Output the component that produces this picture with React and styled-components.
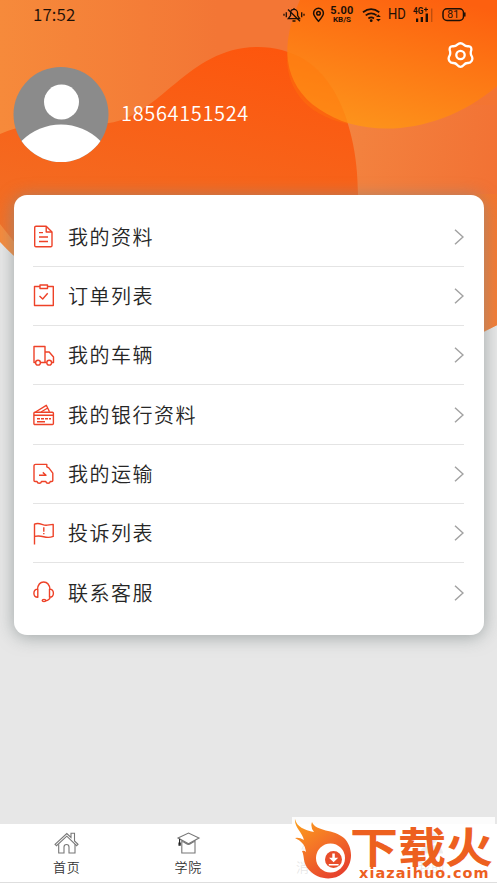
import React from 'react';
import styled, { createGlobalStyle } from 'styled-components';

const Global = createGlobalStyle`
  * { box-sizing: border-box; }
  body { margin: 0; background: #e7e7e7; overflow: hidden; }
`;

const Screen = styled.div`
  position: relative;
  display: flex;
  flex-direction: column;
  width: 497px;
  height: 883px;
  overflow: hidden;
  background: #e7e7e7;
  font-family: 'Noto Sans CJK SC', sans-serif;
  color: #262626;
`;

const Backdrop = styled.svg`
  position: absolute;
  inset: 0 auto auto 0;
`;

const StatusBar = styled.header`
  position: relative;
  display: flex;
  align-items: center;
  justify-content: space-between;
  height: 29px;
  padding: 0 31px 0 33px;
  color: #1d1007;
`;

const Clock = styled.span`
  font-size: 17px;
  font-weight: 350;
  line-height: 27px;
  margin-top: -3px;
  letter-spacing: 0.1px;
`;

const StatusIcons = styled.div`
  display: flex;
  align-items: center;
  height: 29px;
`;

const Glyph = styled.svg`
  display: block;
  flex: none;
  margin-left: ${(p) => p.$gap || 0}px;
`;

const Speed = styled.div`
  display: flex;
  flex-direction: column;
  align-items: center;
  width: 24px;
  margin-left: 5px;
  font-family: Roboto, sans-serif;
  font-weight: 700;
  font-size: 11px;
  line-height: 9px;
  letter-spacing: 0.3px;
  white-space: nowrap;
  small { font-size: 8px; line-height: 9px; letter-spacing: 0; }
`;

const Hd = styled.span`
  width: 18px;
  margin-left: 6px;
  font: 400 15.5px/29px Roboto, sans-serif;
  transform: scaleX(0.84);
  transform-origin: left;
`;

const Profile = styled.section`
  position: relative;
  display: flex;
  align-items: flex-start;
  height: 166px;
  padding: 38px 23px 0 13px;
`;

const Phone = styled.span`
  flex: 1;
  margin: 32px 0 0 12px;
  font-size: 20px;
  font-weight: 350;
  line-height: 28px;
  letter-spacing: 0.65px;
  color: #fff;
`;

const SettingsButton = styled.button`
  display: flex;
  margin-top: -26px;
  padding: 0;
  border: 0;
  background: none;
`;

const Card = styled.main`
  position: relative;
  display: flex;
  flex-direction: column;
  height: 440px;
  margin: 0 13.5px;
  padding: 12.5px 19.5px 0;
  border-radius: 13px;
  background: #fff;
  box-shadow: 0 2px 17px rgba(130, 140, 140, 0.72);
`;

const Row = styled.div`
  display: flex;
  align-items: center;
  height: 59.3px;
  border-bottom: 1px solid #e4e4e4;
  &:last-child { border-bottom: 0; }
`;

const RowLabel = styled.span`
  flex: 1;
  margin-left: 13px;
  font-size: 20px;
  font-weight: 350;
  line-height: 30px;
  letter-spacing: 1.5px;
`;

const TabBar = styled.nav`
  position: relative;
  display: grid;
  grid-template-columns: repeat(4, 1fr);
  height: 59px;
  margin-top: auto;
  padding: 0 5px 0 6px;
  background: #fff;
  border-bottom: 1px solid #dedede;
`;

const Tab = styled.div`
  display: flex;
  flex-direction: column;
  align-items: center;
  padding-top: 7px;
`;

const TabLabel = styled.span`
  margin-top: 3px;
  font-size: 13px;
  font-weight: 350;
  line-height: 18px;
  letter-spacing: 0.8px;
  color: #333;
`;

const Watermark = styled.aside`
  position: absolute;
  right: 2px;
  bottom: 2px;
  display: flex;
  width: 203px;
  height: 64px;
  background: rgba(255, 255, 255, 0.88);
  color: #ed601f;
`;

const Brand = styled.div`
  display: flex;
  flex-direction: column;
  margin-left: -3px;
`;

const BrandName = styled.svg`
  display: block;
  width: 143px;
  height: 50px;
  fill: currentColor;
  overflow: visible;
`;

const BrandUrl = styled.span`
  margin-left: 8px;
  font: 700 14.5px/12px 'DejaVu Sans', sans-serif;
  letter-spacing: 1.1px;
  transform: scaleX(0.995);
  transform-origin: left;
`;

const rowIcons = {
  profile: <><path d="M3 1.2h10.2L19 7v13.5a1.3 1.3 0 0 1-1.3 1.3H3a1.3 1.3 0 0 1-1.3-1.3v-18A1.3 1.3 0 0 1 3 1.2Z" /><path d="M13.2 1.2V7H19M6 7.6h4M6 12h9M6 16.5h9" /></>,
  order: <><path d="M7 2.5H1.5v19h18.8v-19H14M7 1h7.5v3.5H7ZM6.5 12l3.2 3 5-5.8" /></>,
  truck: <><path d="M2.5 18.5H1v-16h11v16H7.5M12 8h4.2l4.3 5v5.5h-1.8M13.5 18.5H12" /><circle cx="5" cy="18.7" r="2.4" /><circle cx="16.2" cy="18.7" r="2.4" /></>,
  bank: <><rect x="0.9" y="9.3" width="19.5" height="12.2" rx="1" /><path d="M1 12.3h19.4M2.5 9 13.3 2.3 16.5 8.8M8 9l6.7-4M4 15.8h3m1 0h3m1 0h3m1 0h2M4 18.8h8" /></>,
  transport: <><path d="M4 19.5H2a1 1 0 0 1-1-1V4a1.6 1.6 0 0 1 1.6-1.6h11.2v2.4l2 1.1 4 5.3v7.3a1 1 0 0 1-1 1h-1.5a2.3 2.3 0 0 1-4.5 0H8.5a2.3 2.3 0 0 1-4.5 0Z" /><path d="M6 13.2h7l-3.2-2.8" /></>,
  complaint: <><path d="M1.5 22.5V2.2c5-2.7 8.3 1.8 12.7.9l6-.7v12c-8.2 3.3-10-2.2-18.7 0" /><path d="M10.8 5.2v4.6M10.8 11v1.2" /></>,
  service: <><path d="M4.5 8.3C5 3.4 7.3 1 10.7 1S16.4 3.4 17 8.3M4.8 8.1C2.3 8.1.9 10 .9 12.3s1.4 4 3.9 4ZM16.5 8.1c2.5 0 3.9 1.9 3.9 4.2s-1.4 4-3.9 4ZM17.2 16.2c-.5 2.3-1.9 3.3-4.5 3.5" /><ellipse cx="11" cy="19.5" rx="1.8" ry="1.1" /></>,
};

const items = [
  ['profile', '我的资料'], ['order', '订单列表'], ['truck', '我的车辆'],
  ['bank', '我的银行资料'], ['transport', '我的运输'],
  ['complaint', '投诉列表'], ['service', '联系客服'],
];

const tabs = [
  ['首页', <><path d="M1 13.3 12.8 2.5l4.2 4V2.3h3.5V10l3.5 3.3-1.4 1.4L12.8 5.2 2.5 14.7Z" /><path d="M4.7 13.3V22H10v-6a2.5 2.5 0 0 1 5 0v6h6v-8.7" /></>],
  ['学院', <><path d="M2 7 12.5 2 23 7 12.5 12.8Z" /><path d="M5.8 9.3V22h13.2V9.3M5.8 10.5c3 .3 4.7 3 6.7 3S16 10.8 19 10.5" /><path d="M3.6 7.7v5.5" stroke="#222" /><path d="M3 12h1.2v2.2H3Z" stroke="#222" /></>],
  ['消息', <><path d="M5 18h15l-2-4V8a5.5 5.5 0 0 0-11 0v6ZM10 21h5" /></>],
  ['我的', <g fill="#555"><circle cx="12.5" cy="7" r="5.5" /><path d="M1.5 22c1-10 21-10 22 0Z" /></g>],
];

function Background() {
  return (
    <Backdrop width="497" height="360" viewBox="0 0 497 360">
      <defs>
        <linearGradient id="base" x1="0" y1=".3" x2="1" y2=".3">
          <stop stopColor="#f68a3b" /><stop offset="1" stopColor="#f37432" />
        </linearGradient>
        <linearGradient id="top" x1="0" y1="0" x2="1" y2="0">
          <stop stopColor="#f68a3b" /><stop offset=".62" stopColor="#f37635" />
        </linearGradient>
        <linearGradient id="right" x1="0" x2="1" y2=".25">
          <stop stopColor="#f38440" /><stop offset="1" stopColor="#f27234" />
        </linearGradient>
        <linearGradient id="hill" x1=".75" y1="0" x2=".4" y2="1">
          <stop stopColor="#fd560d" /><stop offset="1" stopColor="#f07329" />
        </linearGradient>
        <linearGradient id="sun" x1=".8" y1="0" x2=".35" y2="1">
          <stop stopColor="#fd600f" /><stop offset="1" stopColor="#fd931b" />
        </linearGradient>
        <linearGradient id="lowEdge" x1="0" x2="0" y2="1">
          <stop stopColor="#f57928" /><stop offset="1" stopColor="#f58636" />
        </linearGradient>
      </defs>
      <path d="M0 0H497V325Q440 356 300 352Q90 340 0 242Z" fill="url(#base)" />
      <path d="M0 0H350V125H0Z" fill="url(#top)" />
      <path d="M340 105H497V325Q440 356 340 354Z" fill="url(#right)" />
      <path d="M0 134C38 117 72 124 109 123C161 116 188 47 258 47C326 47 358 116 358 194V300H60L0 224Z" fill="url(#hill)" />
      <path d="M300 0C280 43 282 84 319 109C365 141 441 134 497 86V0Z" fill="url(#sun)" />
      <path d="M287 52C319 61 338 91 348 124C303 115 285 85 287 52Z" fill="#ff770b" opacity=".38" />
      <path d="M475 194H497V325L475 337Z" fill="url(#lowEdge)" opacity=".55" />
    </Backdrop>
  );
}

function Status() {
  return (
    <StatusBar>
      <Clock>17:52</Clock>
      <StatusIcons>
        <Glyph width="22" height="16" viewBox="0 0 22 16" fill="none" stroke="currentColor" strokeWidth="1.3">
          <path d="M5.3 11.6h11.3l-2-3V6.2c0-5-7-5-7 0v2.4ZM11 1v1.7M9.5 14h3M5 2.5l12 11.8M1 6.8v2M3.3 5.3v5M18.7 5.3v5M21 6.8v2" />
        </Glyph>
        <Glyph $gap={7} width="13" height="16" viewBox="0 0 13 16" fill="none" stroke="currentColor" strokeWidth="1.5">
          <path d="M6.5 14.2C3.6 10.8 1.6 8.6 1.6 6.2a4.9 4.9 0 0 1 9.8 0c0 2.4-2 4.6-4.9 8Z" /><circle cx="6.5" cy="6.2" r="1.8" />
        </Glyph>
        <Speed>5.00<small>KB/S</small></Speed>
        <Glyph $gap={8} width="20" height="16" viewBox="0 0 20 16" fill="none" stroke="currentColor" strokeWidth="1.8">
          <path d="M1 5.3Q9 -1 17.3 5.3M3.7 8.4Q9.2 4.3 14.6 8.4M6.4 11.4Q9.2 9.4 12 11.4" />
          <circle cx="9.2" cy="13.7" r="1.4" fill="currentColor" stroke="none" />
          <path d="m14 10 2.4-2.4L18.8 10ZM14 12l2.4 2.5 2.4-2.5Z" fill="currentColor" stroke="none" />
        </Glyph>
        <Hd>HD</Hd>
        <Glyph $gap={7} width="21" height="16" viewBox="0 0 21 16" fill="currentColor">
          <text x="0" y="7" fontFamily="Roboto" fontSize="8.2" fontWeight="700">4G</text>
          <path d="M11 2h1.4V.6h1.1V2H15v1.1h-1.5v1.5h-1.1V3.1H11ZM3 11.5h2.2V15H3ZM7.7 10H10v5H7.7ZM12.6 6.5H15V15h-2.4Z" />
          <path d="M18 1.5h1.4V15H18Z" opacity=".28" />
        </Glyph>
        <Glyph $gap={8} width="24" height="14" viewBox="0 0 24 14" fill="none" stroke="currentColor" strokeWidth="1.5">
          <rect x="1" y="0.8" width="20.5" height="11.7" rx="4" /><path d="M22.8 4.6v4" />
          <text x="11.2" y="10.3" textAnchor="middle" fill="currentColor" stroke="none" fontFamily="Roboto" fontSize="10.5">81</text>
        </Glyph>
      </StatusIcons>
    </StatusBar>
  );
}

export default function App() {
  return (
    <>
      <Global />
      <Screen>
        <Background />
        <Status />
        <Profile>
          <Glyph width="96" height="96" viewBox="0 0 96 96">
            <defs><clipPath id="avatar"><circle cx="48" cy="47.5" r="47.5" /></clipPath></defs>
            <g clipPath="url(#avatar)"><path fill="#8b8b8b" d="M0 0h96v96H0z" /><circle cx="48.5" cy="35" r="17.5" fill="#fff" /><circle cx="48" cy="113" r="55.5" fill="#fff" /></g>
          </Glyph>
          <Phone>18564151524</Phone>
          <SettingsButton aria-label="settings">
            <Glyph width="27" height="28" viewBox="0 0 27 28" fill="none" stroke="#fff" strokeWidth="2.3">
              <path strokeLinejoin="round" d="M10.3 3.6Q13.5 .8 16.7 3.6Q18.6 5.5 21.3 5.2Q24.8 5.4 24.3 9.2Q23.2 12 24.3 14.4Q26.3 17.4 24.6 20Q23.4 22.2 20.6 22Q18.3 22 16.7 24Q13.5 27.8 10.3 24Q8.7 22 6.4 22Q3.6 22.2 2.4 20Q.7 17.4 2.7 14.4Q3.8 12 2.7 9.2Q2.2 5.4 5.7 5.2Q8.4 5.5 10.3 3.6Z" />
              <circle cx="13.5" cy="14" r="4.2" />
            </Glyph>
          </SettingsButton>
        </Profile>
        <Card>
          {items.map(([icon, label]) => (
            <Row key={icon}>
              <Glyph width="22" height="23" viewBox="0 0 22 23" fill="none" stroke="#ee4228" strokeWidth="1.4" strokeLinejoin="round">{rowIcons[icon]}</Glyph>
              <RowLabel>{label}</RowLabel>
              <Glyph width="10" height="16" viewBox="0 0 10 16" fill="none" stroke="#a2a2a2" strokeWidth="1.5"><path d="m1 .7 8 7.3L1 15.3" /></Glyph>
            </Row>
          ))}
        </Card>
        <TabBar>
          {tabs.map(([label, icon]) => (
            <Tab key={label}>
              <Glyph width="25" height="24" viewBox="0 0 25 24" fill="none" stroke="#777" strokeWidth="1.1">{icon}</Glyph>
              <TabLabel>{label}</TabLabel>
            </Tab>
          ))}
        </TabBar>
        <Watermark>
          <Glyph width="62" height="64" viewBox="0 0 62 64">
            <defs>
              <linearGradient id="flame" x1="0" y1="0" x2=".65" y2="1"><stop stopColor="#fca01c" /><stop offset=".5" stopColor="#f47327" /><stop offset="1" stopColor="#e7432c" /></linearGradient>
            </defs>
            <path d="M3 2C5 10 12 13 22 15Q18 10 20 5C24 15 42 12 52 21C62 31 61 48 51 56C41 65 25 62 17 53C10 45 13 40 10 34Q12 33 14 35C13 27 9 24 3 21Q7 20 12 23C10 15 2 10 3 2Z" fill="url(#flame)" />
            <circle cx="38.5" cy="41" r="14.5" fill="#fff" />
            <circle cx="41.5" cy="42.5" r="8.5" fill="#e84d2a" />
            <path d="M40.3 36.5h2.5v4.3h3.4l-4.6 4.5-4.6-4.5h3.3ZM36.8 47h9.8v1.6h-9.8Z" fill="#fff" />
          </Glyph>
          <Brand>
            <BrandName viewBox="0 0 143 50">
              <g transform="translate(0 46) scale(1 .88)" fontFamily="'Noto Sans CJK SC', sans-serif" fontSize="48" fontWeight="700">
                <text x="-1" y="0">下载</text>
                <text x="94" y="0">火</text>
              </g>
            </BrandName>
            <BrandUrl>xiazaihuo.com</BrandUrl>
          </Brand>
        </Watermark>
      </Screen>
    </>
  );
}
